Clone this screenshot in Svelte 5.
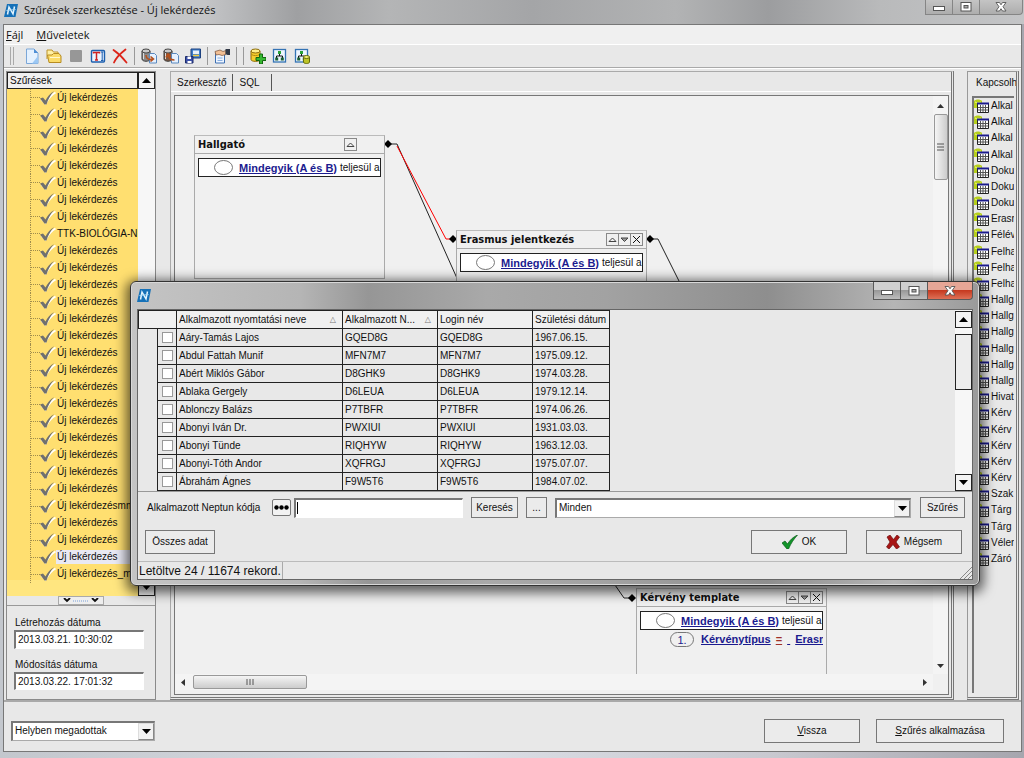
<script lang="ts">
  type Query = { label: string; selected?: boolean };

  const NEW = "Új lekérdezés";
  const queries: Query[] = Array.from({ length: 29 }, () => ({ label: NEW }));
  queries[8] = { label: "TTK-BIOLÓGIA-N" };
  queries[24] = { label: "Új lekérdezésmm" };
  queries[27] = { label: NEW, selected: true };
  queries[28] = { label: "Új lekérdezés_m" };

  const related = [
    "Alkal", "Alkal", "Alkal", "Alkal", "Doku", "Doku", "Doku", "Erasr", "Félév",
    "Felha", "Felha", "Felha", "Hallg", "Hallg", "Hallg", "Hallg", "Hallg", "Hallg",
    "Hivat", "Kérv", "Kérv", "Kérv", "Kérv", "Kérv", "Szak", "Tárg", "Tárg",
    "Véler", "Záró",
  ];

  const tools = [
    "new", "open", "stop", "text", "delete", "|", "dbin", "dbout", "save", "|",
    "props", "||", "dbadd", "tree", "treedb",
  ];

  const people = [
    ["Aáry-Tamás Lajos", "GQED8G", "1967.06.15."],
    ["Abdul Fattah Munif", "MFN7M7", "1975.09.12."],
    ["Abért Miklós Gábor", "D8GHK9", "1974.03.28."],
    ["Ablaka Gergely", "D6LEUA", "1979.12.14."],
    ["Ablonczy Balázs", "P7TBFR", "1974.06.26."],
    ["Abonyi Iván Dr.", "PWXIUI", "1931.03.03."],
    ["Abonyi Tünde", "RIQHYW", "1963.12.03."],
    ["Abonyi-Tóth Andor", "XQFRGJ", "1975.07.07."],
    ["Ábrahám Ágnes", "F9W5T6", "1984.07.02."],
  ];

  let created = $state("2013.03.21. 10:30:02");
  let modified = $state("2013.03.22. 17:01:32");
  let code = $state("");
</script>

{#snippet logo()}
  <svg class="logo" viewBox="0 0 14 13" width="14" height="13" aria-hidden="true">
    <path d="M3 0h11l-2.5 13H0z" fill="#1671b8" />
    <path d="M3.500 10.500 5 3l4 7L10.500 2.500" fill="none" stroke="#e4f5ff" stroke-width="1.500" />
    <path d="M2.500 6.500 11.500 5.500" fill="none" stroke="#a8d8f4" />
  </svg>
{/snippet}

{#snippet arrow(dir: string)}
  <svg class="arrow" viewBox="0 0 9 5" width="9" height="5" aria-hidden="true">
    <path d={dir === "up" ? "M0 5h9L4.5 0z" : "M0 0h9L4.5 5z"} fill="#000" />
  </svg>
{/snippet}

{#snippet caption(active: boolean)}
  <div class="caption" class:active>
    <button aria-label="Kis méret"><svg viewBox="0 0 12 12" width="12" height="12"><rect x=".5" y="5.500" width="11" height="4" fill="#fff" stroke="#555" /></svg></button>
    <button aria-label="Teljes méret"><svg viewBox="0 0 12 12" width="12" height="12"><rect x="1" y="1.500" width="10" height="8.500" fill="#fff" stroke="#555" /><rect x="4" y="4.500" width="4" height="2.500" fill="#aaa" stroke="#555" /></svg></button>
    <button class="x" aria-label="Bezárás"><svg viewBox="0 0 12 12" width="12" height="12"><path d="M1 1.500h3.500L6 3.800 7.500 1.500H11L8 5.700l3 4.300H7.500L6 7.700 4.500 10H1l3-4.300z" fill="#fff" stroke="#555" stroke-width=".9" /></svg></button>
  </div>
{/snippet}

{#snippet toolIcon(name: string)}
  <svg viewBox="0 0 16 16" width="16" height="16" aria-hidden="true">
    {#if name === "new"}
      <path d="M2.500 1h7.500l4 4v10.500H2.500z" fill="#e4f1ff" stroke="#7ba7d8" />
      <path d="M10 1v4h4z" fill="#4f8fd6" /><path d="M8 15.500 14 8v7.500z" fill="#9cc8f4" />
    {:else if name === "open"}
      <path d="M1 11V2h5l1.500 2H12v3" fill="#fff0a4" stroke="#bd932a" />
      <path d="M3 14.500 1.500 7H6l1.500-1.500h5.500L15 8v6.500z" fill="#fbdc6a" stroke="#b78c22" />
      <path d="M4 9.500h10" stroke="#fff8ce" />
    {:else if name === "stop"}
      <rect x="2" y="2" width="12" height="12" rx="1" fill="#979797" />
    {:else if name === "text"}
      <rect x="1.500" y="2.500" width="13" height="11.500" rx="1" fill="#eaf3ff" stroke="#1d5fae" stroke-width="1.400" />
      <path d="M3.500 5.500V4.500h6v1M6.500 4.500v7.500M5 12h3" stroke="#d02020" stroke-width="1.500" fill="none" />
      <path d="M11 4h2.500M12.200 4v8.500M11 12.500h2.500" stroke="#1d5fae" fill="none" />
    {:else if name === "delete"}
      <path d="M1.500 2C6 5 11 10 14.500 14.500M13.500 1.500C9 5 4 10 2 14.500" stroke="#dc2419" stroke-width="1.800" fill="none" stroke-linecap="round" />
    {:else if name === "dbin" || name === "dbout"}
      <path d="M1 3v8c0 3 8 3 8 0V3" fill={name === "dbin" ? "#8a8a8a" : "#7c5a44"} stroke="#373737" />
      <ellipse cx="5" cy="3" rx="4" ry="2" fill="#c9c9c9" stroke="#444" />
      <path d="M2.500 5v6" stroke="#ddd" />
      <path d="M8.500 5.500h5l2 2V15h-7z" fill="#e6f1ff" stroke="#5a88bd" />
      <path d={name === "dbin" ? "M5 7c0 4 3 5 7 4M9.500 8.500l3 2.500-3 2.500" : "M11.500 12C7 12 6 10 5 7M3 9.500 5 6l3 2.500"} stroke="#b5511d" stroke-width="1.600" fill="none" />
    {:else if name === "save"}
      <path d="M6 1h9.500v9H6z" fill="#3e7ecb" stroke="#1c417f" />
      <path d="M8 2.500h6V6H8z" fill="#e7f1fb" /><path d="M8 7.500h6" stroke="#f3ce40" stroke-width="1.500" />
      <path d="M.5 8.500h7.500v6.500H.5z" fill="#3b4fa8" stroke="#1c2c69" />
      <path d="M2.500 8.500h3.500v2.500H2.500zM2.500 13h4v2h-4z" fill="#fff" />
    {:else if name === "props"}
      <path d="M1.500 4.500h9V15h-9z" fill="#eef5ff" stroke="#3c6fb2" />
      <path d="M3.500 10h5M3.500 12.500h5" stroke="#88aee0" />
      <path d="M1 3.500 6 2l3 1.500 3-1v4L8 7.500 5 6.500 2 7z" fill="#f2bf94" stroke="#795038" stroke-width=".7" />
      <path d="M11.500 1H16v6h-2.500l-2-1z" fill="#303846" />
    {:else if name === "dbadd"}
      <path d="M1 3v8.500c0 2.500 9 2.500 9 0V3" fill="#f5ce2d" stroke="#8c6b08" />
      <ellipse cx="5.500" cy="3" rx="4.500" ry="2" fill="#fff08b" stroke="#8c6b08" />
      <path d="M1.500 6.500c2 1.500 6 1.500 8 0" stroke="#b18b14" fill="none" />
      <path d="M9.500 6h3v3.500H16v3h-3.500V16h-3v-3.500H6v-3h3.500z" fill="#37b832" stroke="#12670f" />
    {:else}
      <rect x="1.500" y="1.500" width="12" height="12.500" fill="#eef6ff" stroke="#3473b4" stroke-width="1.300" />
      <path d="M7.500 5v3M4.500 11V8h6v3" stroke="#111" fill="none" />
      <path d="M6 3h3v3H6z" fill="#28a138" /><path d="M3.200 9.500h3v3h-3zM8.800 9.500h3v3h-3z" fill="#195f34" />
      {#if name === "treedb"}
        <path d="M9.500 9v5c0 2 6 2 6 0V9" fill="#bcc326" stroke="#62690b" /><ellipse cx="12.500" cy="9" rx="3" ry="1.500" fill="#f3ef6f" stroke="#62690b" />
      {/if}
    {/if}
  </svg>
{/snippet}

{#snippet condition()}
  <div class="cond">
    <svg class="oval" viewBox="0 0 19 15" width="19" height="15" aria-hidden="true"><ellipse cx="9.500" cy="7.500" rx="9" ry="7" fill="#fff" stroke="#777" /></svg>
    <a class="all" href="#all">Mindegyik (A és B)</a><span>teljesül a</span>
  </div>
{/snippet}

{#snippet nodeHead(title: string, full: boolean)}
  <header>
    <b>{title}</b>
    <span class="node-btns">
      <button aria-label="Fel"><svg viewBox="0 0 9 9" width="9" height="9"><path d="M1 6.500h7L4.500 3z" fill="none" stroke="#444" /></svg></button>
      {#if full}
        <button aria-label="Le"><svg viewBox="0 0 9 9" width="9" height="9"><path d="M1 3h7L4.500 6.500z" fill="#999" stroke="#444" /></svg></button>
        <button aria-label="Töröl"><svg viewBox="0 0 9 9" width="9" height="9"><path d="M1 1l7 7M8 1 1 8" stroke="#111" /></svg></button>
      {/if}
    </span>
  </header>
{/snippet}

<div class="window">
  <div class="titlebar">
    {@render logo()}
    <span>Szűrések szerkesztése - Új lekérdezés</span>
    {@render caption(false)}
  </div>

  <div class="client">
    <nav class="menu">
      <button><u>F</u>ájl</button>
      <button><u>M</u>űveletek</button>
    </nav>
    <div class="toolbar">
      <i class="sep grip"></i>
      {#each tools as t}
        {#if t === "|" || t === "||"}
          <i class="sep" class:double={t === "||"}></i>
        {:else}
          <button aria-label={t}>{@render toolIcon(t)}</button>
        {/if}
      {/each}
    </div>

    <div class="work">
      <aside class="left">
        <div class="tree">
          <div class="tree-main">
            <div class="tree-head">Szűrések</div>
            <ul>
              {#each queries as q}
                <li>
                  <i class="branch"></i>
                  <svg viewBox="0 0 16 14" width="16" height="14" aria-hidden="true">
                    <path d="M1.500 8.500 5.500 12.500C8 8 11 4 15.500 1.500" fill="none" stroke="#fff" stroke-width="2" />
                    <path d="M0 7.500 3 6.500 5.500 9.500C7.500 5.500 10 2.500 14 0 10.500 4 8 8.500 6.500 13.500H4.500z" fill="#70706e" />
                  </svg>
                  <span class:selected={q.selected}>{q.label}</span>
                </li>
              {/each}
            </ul>
          </div>
          <div class="bar">
            <button aria-label="Fel">{@render arrow("up")}</button>
            <button aria-label="Le">{@render arrow("down")}</button>
          </div>
        </div>
        <button class="splitter" aria-label="Összecsukás">
          <svg viewBox="0 0 36 5" width="36" height="5"><path d="M1 0l3 3 3-3M29 0l3 3 3-3" fill="none" stroke="#111" stroke-width="1.800" /><path d="M10 3h16" stroke="#7aa0d8" stroke-dasharray="1 1" /></svg>
        </button>
        <div class="dates">
          <label for="created">Létrehozás dátuma</label>
          <input id="created" bind:value={created} />
          <label for="modified">Módosítás dátuma</label>
          <input id="modified" bind:value={modified} />
        </div>
      </aside>

      <main class="editor">
        <div class="tabs">
          <button class="on">Szerkesztő</button>
          <button>SQL</button>
        </div>
        <div class="page">
          <div class="scroller">
            <div class="canvas">
              <svg class="links" viewBox="0 0 760 578" width="760" height="578" aria-hidden="true">
                <g fill="none" stroke="#222">
                  <path d="M213 48h9L285 189M474 143h9L506 189M440 489l9 13h9" />
                  <path d="M222 50 271 143h8" stroke="#f00" />
                </g>
                <path d="M209 48l4-4 4 4-4 4zM274 143l4-4 4 4-4 4zM471 143l4-4 4 4-4 4zM453 502l4-4 4 4-4 4z" />
              </svg>
              <section class="node hallgato">
                {@render nodeHead("Hallgató", false)}
                {@render condition()}
              </section>
              <section class="node erasmus">
                {@render nodeHead("Erasmus jelentkezés", true)}
                {@render condition()}
              </section>
              <section class="node kerveny">
                {@render nodeHead("Kérvény template", true)}
                {@render condition()}
                <div class="rule">
                  <i class="num">1.</i>
                  <a href="#field">Kérvénytípus</a>
                  <a class="op" href="#op">=</a>
                  <a href="#value">&nbsp;</a>
                  <a href="#value">Erasm</a>
                </div>
              </section>
            </div>
            <div class="vscroll">
              <svg viewBox="0 0 7 4" width="7" height="4" aria-hidden="true"><path d="M0 4h7L3.500 0z" fill="#333" /></svg>
              <div class="thumb"><svg viewBox="0 0 7 8" width="7" height="8" aria-hidden="true"><path d="M0 1h7M0 4h7M0 7h7" stroke="#555" /></svg></div>
              <svg class="end" viewBox="0 0 7 4" width="7" height="4" aria-hidden="true"><path d="M0 0h7L3.500 4z" fill="#333" /></svg>
            </div>
            <div class="hscroll">
              <svg viewBox="0 0 4 7" width="4" height="7" aria-hidden="true"><path d="M4 0v7L0 3.500z" fill="#333" /></svg>
              <div class="thumb"><svg viewBox="0 0 8 6" width="8" height="6" aria-hidden="true"><path d="M1 0v6M4 0v6M7 0v6" stroke="#555" /></svg></div>
              <svg class="end" viewBox="0 0 4 7" width="4" height="7" aria-hidden="true"><path d="M0 0v7L4 3.500z" fill="#333" /></svg>
            </div>
          </div>
        </div>
      </main>

      <aside class="right">
        <div class="right-head">Kapcsolha</div>
        <ul>
          {#each related as r}
            <li>
              <svg viewBox="0 0 15 14" width="15" height="14" aria-hidden="true">
                <path d="M0 2c2-2 6-2 8 0v7H0z" fill="#b6cf1c" /><path d="M1 3c2 1 4 1 6 0" stroke="#f2fa80" fill="none" />
                <path d="M3.500 4.500h11v9h-11z" fill="#fff" stroke="#222" /><path d="M3 4.500h12" stroke="#1a1a8c" stroke-width="2" />
                <path d="M4 8.500h10M4 11h10M6.500 6v7M9 6v7M11.500 6v7" stroke="#555" />
              </svg>
              {r}
            </li>
          {/each}
        </ul>
      </aside>
    </div>

    <footer class="footer">
      <div class="combo">
        <select aria-label="Hely"><option>Helyben megadottak</option></select>
        <span class="drop">{@render arrow("down")}</span>
      </div>
      <button class="btn back"><span><u>V</u>issza</span></button>
      <button class="btn apply"><span><u>S</u>zűrés alkalmazása</span></button>
    </footer>
  </div>

  <div class="dialog" role="dialog" aria-label="Alkalmazottak">
    <div class="dialog-title">
      {@render logo()}
      {@render caption(true)}
    </div>
    <div class="dialog-body">
      <div class="grid">
        <table>
          <colgroup><col class="c0" /><col class="c1" /><col class="c2" /><col class="c3" /><col class="c3" /><col class="c4" /></colgroup>
          <thead>
            <tr>
              <th colspan="2"></th>
              <th><span>Alkalmazott nyomtatási neve <em>△</em></span></th>
              <th><span>Alkalmazott N... <em>△</em></span></th>
              <th>Login név</th>
              <th>Születési dátum</th>
            </tr>
          </thead>
          <tbody>
            {#each people as [name, login, born]}
              <tr>
                <td class="none"></td>
                <td class="tick"><input type="checkbox" aria-label={name} /></td>
                <td>{name}</td>
                <td>{login}</td>
                <td>{login}</td>
                <td>{born}</td>
              </tr>
            {/each}
          </tbody>
        </table>
        <div class="bar">
          <button aria-label="Fel">{@render arrow("up")}</button>
          <div class="flat-thumb"></div>
          <button aria-label="Le">{@render arrow("down")}</button>
        </div>
      </div>
      <div class="search">
        <label for="code">Alkalmazott Neptun kódja</label>
        <button class="dots" aria-label="Mező"><svg viewBox="0 0 15 5" width="15" height="5"><circle cx="2.500" cy="2.500" r="2.200" /><circle cx="7.500" cy="2.500" r="2.200" /><circle cx="12.500" cy="2.500" r="2.200" /></svg></button>
        <div class="code">
          <i class="caret"></i><input id="code" bind:value={code} />
        </div>
        <button class="btn find">Keresés</button>
        <button class="btn more">...</button>
        <div class="combo">
          <select aria-label="Szűrés"><option>Minden</option></select>
          <span class="drop">{@render arrow("down")}</span>
        </div>
        <button class="btn filter">Szűrés</button>
      </div>
      <div class="actions">
        <button class="btn all-data">Összes adat</button>
        <button class="btn ok">
          <svg viewBox="0 0 16 14" width="16" height="14" aria-hidden="true"><path d="M0 8 3 6l2.500 3C8 5 11 2 15.500 0 12 4 9 8 6.500 14H5z" fill="#12952a" stroke="#0a5c17" stroke-width=".7" /></svg>
          OK
        </button>
        <button class="btn cancel">
          <svg viewBox="0 0 14 14" width="14" height="14" aria-hidden="true"><path d="M1 2 4 0l3.500 4.500L11 0l2.500 2L10 7l3.500 5-3 2L7 9.500 3 14 .5 12 4 7z" fill="#a81515" stroke="#6b0b0b" stroke-width=".7" /></svg>
          Mégsem
        </button>
      </div>
      <div class="status">
        <span>Letöltve 24 / 11674 rekord.</span>
        <svg viewBox="0 0 12 12" width="12" height="12" aria-hidden="true"><path d="M0 12 12 0M4 12l8-8M8 12l4-4" stroke="#888" /></svg>
      </div>
    </div>
  </div>
</div>

<style>
  :global(body) { margin: 0; overflow: hidden; }
  .window {
    position: relative; display: flex; flex-direction: column; height: 100vh;
    box-sizing: border-box; padding: 0 2px 6px 3px; overflow: hidden;
    background: linear-gradient(90deg, #c3c7cd, #dcdfe6 45%, #c9c9d0 75%, #a6a6ae);
    font: 10px/14px "Liberation Sans", sans-serif; color: #111;
  }
  .window :global(*) { box-sizing: border-box; }
  button, input, select { font: inherit; color: inherit; margin: 0; border-radius: 0; }
  button { padding: 0; border: 0; background: none; white-space: nowrap; }
  svg { flex: none; display: block; }
  ul { list-style: none; margin: 0; padding: 0; }

  .titlebar {
    display: flex; align-items: flex-start; gap: 6px; height: 24px; flex: none;
    margin: 0 -2px 0 -3px; padding-left: 4px;
    background: linear-gradient(90deg, #c8cacc 0, #c4c5c7 20%, #9fa0a2 29%, #b4b5b6 38%, #a4a5a7 52%, #b2b3b4 66%, #9c9d9f 75%, #b9babb 86%, #c4c5c7);
    font: 11px/20px "Open Sans", sans-serif;
  }
  .titlebar .logo { margin-top: 4px; }
  .titlebar .caption { margin-right: 1px; }
  .caption { display: flex; margin-left: auto; }
  .caption button {
    display: grid; place-items: center; width: 27px; height: 15px;
    border: 1px solid #858585; border-width: 0 0 1px 1px;
    background: linear-gradient(#c4c4c4, #adadad);
  }
  .caption button.x { width: 44px; border-right-width: 1px; border-radius: 0 0 4px 0; }
  .caption.active button { height: 18px; border-color: #5a5a5a; background: linear-gradient(#d0d0d0 45%, #999 50%, #bdbdbd); }
  .caption.active button.x { width: 46px; background: linear-gradient(#e6a696 45%, #c63a20 50%, #de7056); }

  .client {
    display: flex; flex-direction: column; flex: 1; min-height: 0;
    border: 1px solid #777; background: #e8e8e8;
  }
  .menu { display: flex; height: 19px; flex: none; background: #f0f0f0; font: 11px/14px "Open Sans", sans-serif; }
  .menu button { padding: 0 2px; margin-right: 9px; }
  .toolbar {
    display: flex; align-items: center; height: 24px; flex: none;
    border-top: 1px solid #fff; border-bottom: 1px solid #a9a9a9;
    box-shadow: 0 1px #fff;
  }
  .toolbar button { display: grid; place-items: center; width: 22px; height: 22px; }
  .sep { width: 7px; height: 18px; flex: none; background: linear-gradient(#999, #999) 3px 0 / 1px 100% no-repeat; }
  .sep.double { width: 14px; background: linear-gradient(90deg, #999 1px, transparent 1px 7px, #999 7px 8px, transparent 8px) 3px 0 no-repeat; }
  .sep.grip { width: 17px; background: linear-gradient(90deg, #aaa 1px, transparent 1px 3px, #aaa 3px 4px, transparent 4px) 6px 0 no-repeat; }

  .work { display: flex; flex: 1; min-height: 0; padding: 3px 2px 0; border-bottom: 2px solid #a9a9a9; }
  .left { display: flex; flex-direction: column; width: 150px; flex: none; border: 1px solid #8a8a8a; }
  .tree { display: flex; flex: 1; min-height: 0; }
  .tree-main { display: flex; flex-direction: column; flex: 1; min-width: 0; background: #ffdf70; }
  .tree-head { height: 17px; flex: none; border: 1px solid #222; background: #f0f0f0; padding-left: 2px; line-height: 16px; }
  .tree ul { flex: 1; display: flex; flex-direction: column; padding-bottom: 13px; background: linear-gradient(#ffe680, #ffe680) 0 100% / 100% 16px no-repeat; overflow: hidden; }
  .tree li { display: flex; align-items: center; flex: 1; min-height: 0; padding-left: 23px; white-space: nowrap; }
  .branch { align-self: stretch; width: 10px; flex: none; border-left: 1px dotted #a08c4c; background: repeating-linear-gradient(90deg, #a08c4c 0 1px, transparent 1px 2px) 0 50% / 100% 1px no-repeat; }
  .tree li span { padding-left: 1px; }
  .tree li .selected { background: #e9e9f3; flex: 1; }
  .bar { display: flex; flex-direction: column; justify-content: space-between; width: 17px; flex: none; background: #f7f7f7; }
  .bar button { display: grid; place-items: center; height: 17px; border: 1px solid #222; background: #f4f4f4; }
  .splitter { height: 9px; width: 46px; align-self: center; display: grid; place-items: center; border: 1px solid #aaa; background: #eee; }
  .dates { display: flex; flex-direction: column; height: 94px; flex: none; padding: 10px 11px 0 7px; border-top: 1px solid #999; }
  .dates input { height: 19px; margin-bottom: 9px; }
  .dates label { height: 15px; padding-left: 1px; }
  input:not([type="checkbox"]), .combo { border: 1px solid #777; border-width: 2px 1px 1px 2px; border-color: #777 #fff #fff #777; background: #fff; padding: 0 2px; min-width: 0; outline: 0; }

  .editor { display: flex; flex-direction: column; flex: 1; min-width: 0; margin: 0 13px 0 14px; border: 1px solid #aaa; border-right: 3px double #777; border-bottom: 3px double #777; }
  .tabs { display: flex; height: 19px; flex: none; }
  .tabs button { padding: 0 6px; margin: 2px 0 0; height: 18px; border-right: 1px solid #555; }
  .tabs button:not(.on) { padding-right: 12px; }
  .page { display: flex; flex: 1; min-height: 0; padding: 3px 2px 2px 3px; border-top: 1px solid #fff; }
  .scroller { flex: 1; min-width: 0; display: grid; grid-template: minmax(0, 1fr) 16px / minmax(0, 1fr) 15px; border: 1px solid #777; background: #f0f0f0; padding-bottom: 4px; }
  .canvas { position: relative; overflow: hidden; }
  .links { position: absolute; left: 0; top: 0; }
  .node { position: absolute; width: 191px; border: 1px solid #aaa; border-top-color: #bbb; background: #f0f0f0; }
  .hallgato { left: 19px; top: 39px; height: 144px; }
  .erasmus { left: 281px; top: 134px; height: 144px; }
  .kerveny { left: 461px; top: 492px; height: 144px; }
  .node header { display: flex; align-items: center; height: 18px; padding: 0 3px; border-bottom: 1px solid #aaa; }
  .node b { font: bold 11px/16px "DejaVu Sans Condensed", "Open Sans", sans-serif; }
  .node-btns { display: flex; margin-left: auto; }
  .hallgato .node-btns { margin-right: 24px; }
  .node-btns button { display: grid; place-items: center; width: 13px; height: 13px; border: 1px solid #888; margin-left: -1px; }
  .cond { display: flex; align-items: center; height: 19px; margin: 4px 3px 0; padding-left: 15px; border: 1px solid #222; background: #fff; overflow: hidden; white-space: nowrap; }
  .cond .all { margin: 0 3px 0 6px; font-size: 11px; font-weight: bold; }
  .node a { color: #1b1b8f; }
  .rule { display: flex; align-items: center; height: 18px; margin-right: 3px; padding-left: 33px; overflow: hidden; white-space: nowrap; font: bold 11px/14px "Liberation Sans", sans-serif; }
  .num { width: 24px; height: 15px; flex: none; margin-right: 7px; border: 1px solid #777; border-radius: 8px; font-style: normal; font-weight: normal; text-align: center; line-height: 14px; color: #1b1b8f; }
  .rule a { margin-right: 5px; }
  .rule .op { color: #a03028; }
  .vscroll, .hscroll { display: flex; align-items: center; background: #f4f4f4; }
  .vscroll { flex-direction: column; padding: 8px 0 6px; }
  .hscroll { padding: 0 6px; }
  .vscroll .end { margin-top: auto; }
  .hscroll .end { margin-left: auto; }
  .thumb { display: grid; place-items: center; border: 1px solid #999; border-radius: 2px; background: linear-gradient(90deg, #f5f5f5, #ccc); }
  .vscroll .thumb { width: 14px; height: 66px; margin-top: 6px; }
  .hscroll .thumb { width: 114px; height: 14px; margin-left: 8px; background: linear-gradient(#f5f5f5, #ccc); }

  .right { display: flex; flex-direction: column; width: 52px; flex: none; border: 1px solid #999; border-right: 3px double #777; border-bottom: 3px double #777; overflow: hidden; white-space: nowrap; }
  .right-head { height: 24px; flex: none; padding: 4px 0 0 8px; }
  .right ul { flex: 1; display: flex; flex-direction: column; margin: 0 2px 4px 4px; padding-bottom: 126px; border: 1px solid #777; border-width: 2px 0 0 2px; overflow: hidden; }
  .right li { display: flex; align-items: center; flex: 1; min-height: 0; gap: 2px; overflow: hidden; }

  .footer { display: flex; align-items: center; height: 49px; flex: none; padding: 8px 17px 0 7px; }
  .footer .combo { width: 144px; margin-right: auto; }
  .combo { display: grid; grid-template-columns: minmax(0, 1fr); height: 20px; padding: 0; border-color: #777 #aaa #aaa #777; }
  .combo select { grid-area: 1 / 1; appearance: none; border: 0; background: #fff; padding: 0 2px; min-width: 0; }
  .drop { grid-area: 1 / 1; justify-self: end; display: grid; place-items: center; width: 16px; border: 1px solid #ddd; border-right-color: #888; border-bottom-color: #888; background: #f2f2f2; pointer-events: none; }
  .btn { display: flex; align-items: center; justify-content: center; height: 24px; border: 1px solid #777; background: #ebebeb; }
  .back { width: 96px; }
  .apply { width: 128px; margin-left: 16px; }

  .dialog {
    position: absolute; left: 130px; top: 281px; width: 850px; height: 305px;
    display: flex; flex-direction: column; padding: 0 6px 5px;
    border: 1px solid #333; border-radius: 6px;
    background: linear-gradient(90deg, #c4c4c4 0, #b5b5b5 20%, #969696 28%, #a9a9a9 42%, #a2a2a2 56%, #8e8e8e 75%, #b5b5b5 90%, #9a9a9a);
    box-shadow: inset 0 0 0 1px #d8d8d8, 0 3px 12px 4px rgba(0, 0, 0, 0.6);
  }
  .dialog-title { display: flex; align-items: flex-start; height: 27px; flex: none; }
  .dialog-title .logo { margin-top: 7px; }
  .dialog-body { display: flex; flex-direction: column; flex: 1; min-height: 0; border: 1px solid #666; background: #e8e8e8; }
  .grid { display: flex; justify-content: space-between; height: 182px; overflow: hidden; border-bottom: 1px solid #999; }
  .grid .bar { justify-content: flex-start; padding-top: 1px; }
  .grid .bar button:last-child { margin-top: auto; }
  .flat-thumb { height: 56px; margin-top: 6px; border: 1px solid #222; background: #ededed; }
  table { border-collapse: collapse; table-layout: fixed; width: 471px; height: 181px; }
  .c0, .c1 { width: 19px; }
  .c2 { width: 166px; }
  .c3 { width: 95px; }
  .c4 { width: 77px; }
  tr { height: 18px; }
  th, td { border: 1px solid #222; padding: 0 2px; height: 18px; line-height: 16px; text-align: left; font-weight: normal; white-space: nowrap; overflow: hidden; }
  th { background: #f0f0f0; }
  th span { display: flex; justify-content: space-between; }
  th em { font: 8px/16px "DejaVu Sans", sans-serif; color: #777; padding-right: 4px; }
  td.none { border-left: 0; border-bottom: 0; border-top: 0; }
  .tick input { appearance: none; display: block; width: 11px; height: 11px; margin: 0 auto; border: 1px solid #999; background: #fff; }

  .search { display: flex; align-items: center; height: 31px; flex: none; padding: 0 7px 0 9px; }
  .search label { width: 125px; }
  .dots { display: grid; place-items: center; width: 19px; height: 17px; margin-right: 3px; border: 1px solid #777; border-radius: 2px; background: #f2f2f2; }
  .code { display: grid; width: 169px; }
  .code input { grid-area: 1 / 1; height: 20px; }
  .caret { grid-area: 1 / 1; z-index: 1; width: 1px; height: 12px; margin: 4px 0 0 3px; background: #000; }
  .search .btn { height: 21px; }
  .find { width: 47px; margin-left: 8px; }
  .more { width: 21px; margin: 0 8px; }
  .search .combo { flex: 1; }
  .filter { width: 45px; margin-left: 9px; }
  .actions { display: flex; align-items: center; height: 38px; flex: none; padding: 0 10px 0 7px; }
  .all-data { width: 70px; margin-right: auto; }
  .ok, .cancel { width: 96px; gap: 4px; }
  .cancel { margin-left: 19px; }
  .status { display: flex; align-items: flex-end; justify-content: space-between; flex: 1; border-top: 1px solid #bbb; background: linear-gradient(#aaa, #aaa) 144px 0 / 1px 100% no-repeat; font-size: 12px; line-height: 16px; }
  .status span { padding-left: 1px; }
</style>
